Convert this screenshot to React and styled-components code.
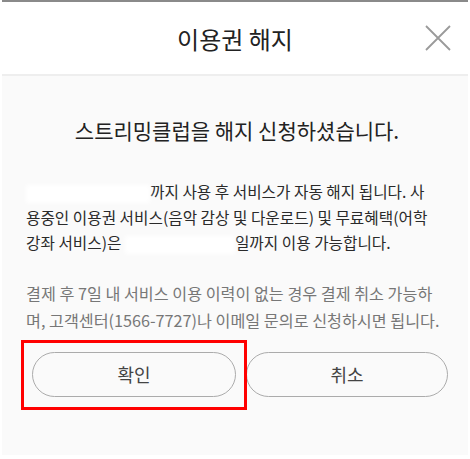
import { styled, createGlobalStyle } from 'styled-components';

const Global = createGlobalStyle`
	body {
		margin: 0;
		background: #fff;
		font-family: "Noto Sans CJK KR", "Noto Sans", sans-serif;
	}
`;

const Dialog = styled.div`
	width: 466px;
	margin: 0 2px;
	border-top: 2px solid #8a8a8a;
`;

const Header = styled.header`
	display: grid;
	grid-template-columns: 60px 1fr 60px;
	align-items: center;
	height: 72px;
	background: #fff;
	border-bottom: 2px solid #eeeeee;
`;

const Title = styled.h1`
	grid-column: 2;
	margin: 0;
	text-align: center;
	font-size: 24px;
	font-weight: 400;
	color: #222;
`;

const Close = styled.button`
	justify-self: center;
	display: flex;
	padding: 0;
	border: 0;
	background: none;
	color: #9a9a9a;
	cursor: pointer;
`;

const Body = styled.section`
	box-sizing: border-box;
	height: 379px;
	padding: 40px 20px 0 24px;
	background: #fafafa;
`;

const Heading = styled.h2`
	margin: 0 0 35px;
	text-align: center;
	font-size: 21px;
	line-height: 28px;
	font-weight: 400;
	color: #222;
`;

const Text = styled.p`
	margin: 0 0 ${props => props.gap || 0}px;
	font-size: ${props => props.size || 15.7}px;
	line-height: ${props => props.lh || 25.5}px;
	color: ${props => props.color || '#2a2a2a'};
	white-space: nowrap;
`;

const Hidden = styled.span`
	display: inline-block;
	width: ${props => props.w}px;
	height: 18px;
	vertical-align: middle;
	background: #fff;
	filter: blur(2px);
`;

const Buttons = styled.div`
	position: relative;
	display: grid;
	grid-template-columns: 204px 202px;
	gap: 10px;
	margin: 18px 0 0 6px;
`;

const Pill = styled.button`
	height: 45px;
	border: 1px solid #ababab;
	border-radius: 23px;
	background: transparent;
	font-family: inherit;
	font-size: 18px;
	color: #444;
	cursor: pointer;
`;

const Mark = styled.div`
	position: absolute;
	left: -11px;
	top: -12px;
	width: 220px;
	height: 64px;
	border: 3px solid #ff0000;
	pointer-events: none;
`;

export default function App() {
	return (
		<>
			<Global />
			<Dialog>
				<Header>
					<Title>이용권 해지</Title>
					<Close aria-label="닫기">
						<svg width="28" height="28" viewBox="0 0 28 28">
							<path d="M2 2L26 26M26 2L2 26" stroke="currentColor" strokeWidth="1.8" />
						</svg>
					</Close>
				</Header>
				<Body>
					<Heading>스트리밍클럽을 해지 신청하셨습니다.</Heading>
					<Text gap={24}>
						<Hidden w={124} />
						까지 사용 후 서비스가 자동 해지 됩니다. 사<br />
						용중인 이용권 서비스(음악 감상 및 다운로드) 및 무료혜택(어학<br />
						강좌 서비스)은 <Hidden w={110} />일까지 이용 가능합니다.
					</Text>
					<Text lh={27} size={16.2} color="#777">
						결제 후 7일 내 서비스 이용 이력이 없는 경우 결제 취소 가능하<br />
						며, 고객센터(1566-7727)나 이메일 문의로 신청하시면 됩니다.
					</Text>
					<Buttons>
						<Pill>확인</Pill>
						<Pill>취소</Pill>
						<Mark />
					</Buttons>
				</Body>
			</Dialog>
		</>
	);
}
